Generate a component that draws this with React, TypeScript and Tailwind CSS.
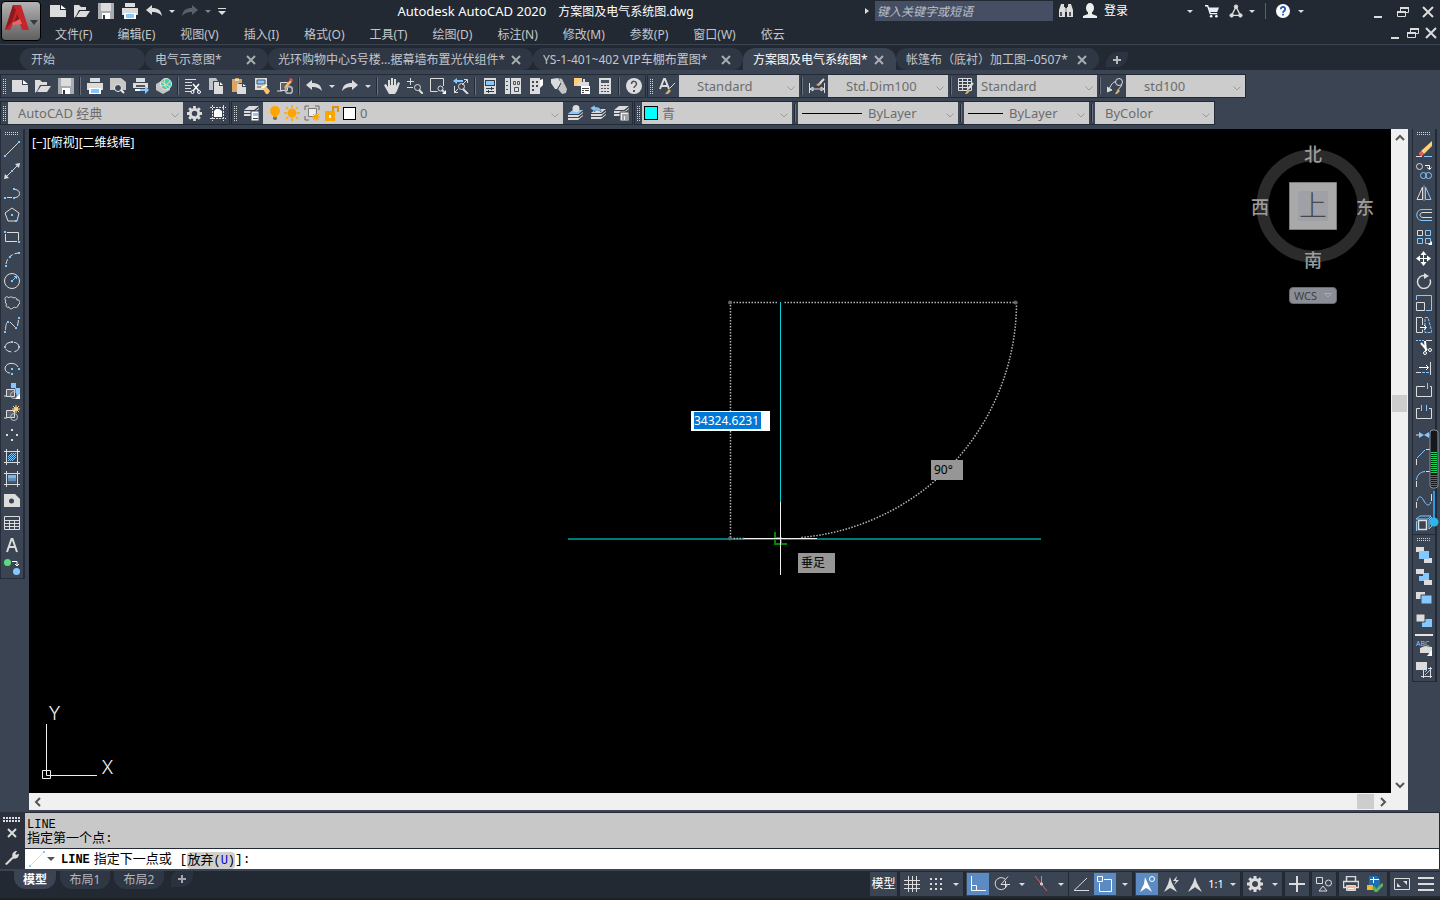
import React from 'react';
import clsx from 'clsx';

const G = '#dcdcdc';
const B = '#85c8ff';
const D = '#3b4453';

// Small node marker used by most of the draw icons
const Dot: React.FC<{ x: number; y: number; c?: string }> = ({ x, y, c = B }) => (
  <rect x={x} y={y} width="2" height="2" fill={c} stroke="none" />
);

const printer = (
  <g stroke="none">
    <path d="M3 0h10v4H3zM0 5h16v7h-2v-2H2v2H0z" fill={G} />
    <path d="M2 10h12v6H2z" fill="#fff" />
    <path d="M4 11h8v4H4z" fill={B} />
  </g>
);

const layers = (y: number) => (
  <path d={`M6 ${y}h10l-5 4H1zM1 ${y + 5}h11l4-3v1l-5 4H1zM1 ${y + 8}h11l4-3v1l-5 4H1z`} fill={G} stroke="none" />
);

const icons: Record<string, React.ReactNode> = {
  new: <g stroke="none"><path d="M0 2h10v5h6v7H0z" fill={G} /><path d="M11 2l5 4h-5z" fill="#fff" /></g>,
  open: <path d="M0 15V2h5l2 2h5v3H5l-3 6zM6 8h10l-4 6H2z" fill={G} stroke="none" />,
  save: <g stroke="none"><path d="M0 0h16v16H0z" fill="#a8abb0" /><path d="M3 0h10v8H3z" fill={G} /><path d="M4 10h8v6H4z" fill="#fff" /><path d="M5 12h2v4H5z" fill="#333" /></g>,
  print: printer,
  undo: <path d="M0 7l6-5v3c6 0 9 2 10 8-3-3-5-4-10-4v3z" fill={G} stroke="none" />,
  redo: <path d="M16 7l-6-5v3C4 5 1 7 0 13c3-3 5-4 10-4v3z" fill={G} stroke="none" />,
  redoOff: <path d="M16 7l-6-5v3C4 5 1 7 0 13c3-3 5-4 10-4v3z" fill="#59606c" stroke="none" />,
  preview: <g><path d="M0 0h11l5 4v8H0z" fill="#c8c8c8" stroke="none" /><circle cx="8" cy="10" r="3.5" fill={D} stroke="#eee" /><path d="M11 12l3 3" stroke="#eee" strokeWidth="2" /></g>,
  publish: <g stroke="none"><path d="M3 0h9v4H3zM0 5h15v5H0z" fill={G} /><path d="M3 7h9v2H3z" fill="#555" /><path d="M2 11h6v2H2z" fill="#fff" /><path d="M7 11h5V8l4 4-4 4v-3H7z" fill={B} /></g>,
  web: <g><path d="M0 6l7-4 7 4v6l-7 4-7-4z" fill="#c4c4c4" stroke="none" /><circle cx="10" cy="6" r="5.5" fill="#3fd0c4" stroke="#e6eeee" /><path d="M6 4l8 5M9 1c-2 4 0 8 3 10M5 8c4 0 7-2 9-5" stroke="#efe39a" /><path d="M6 9l4 2" stroke="#ff7575" /></g>,
  cut: <g><path d="M0 1.5h11M0 4.5h7M0 7.5h7M0 10.5h6M0 13.5h6" /><path d="M8 6l6 7M14 6l-6 7" stroke="#fff" strokeWidth="1.5" /><circle cx="7.5" cy="14" r="1.5" stroke="#fff" /><circle cx="14" cy="14" r="1.5" stroke="#fff" /></g>,
  copy: <g stroke="none"><path d="M1 0h7l2 3H5v9H1z" fill="#bfc2c6" /><path d="M6 4h5v4h4v8H6z" fill={G} /><path d="M12 4l3 3h-3z" fill="#fff" /></g>,
  paste: <g stroke="none"><path d="M1 1h3V0h4v1h3v4H8v9H1z" fill="#d9a565" /><path d="M4 1h4v2H4z" fill={G} /><path d="M6 6h5v3h4v7H6z" fill={G} /><path d="M12 6l3 2h-3z" fill="#fff" /></g>,
  match: <g><path d="M1 0h12v7h-2v5H1z" fill={G} stroke="none" /><path d="M3 2h8v4H3z" fill={B} stroke="#4a5361" /><path d="M3 9h4" stroke="#4a5361" /><path d="M7 8l3-2 6 7-2 3h-2z" fill="#ffc36e" stroke="none" /><path d="M8 10l5-3" stroke="#fff" strokeWidth="2" /></g>,
  blockEdit: <g><path d="M3.5 4.5h7v8h-7zM0 13h5" fill="#596170" /><circle cx="12" cy="12" r="3.5" stroke="#aeb1b7" strokeWidth="2" /><path d="M8 8l5-6 2 2-5 5-3 1z" fill="#ffb45c" stroke="none" /><path d="M12 1l2-1 2 2-1 2z" fill="#f24c4c" stroke="none" /></g>,
  pan: <path d="M5 16L1 9 0 7l2-1 2 3V2h2v5h1V0h2v7h1V1h2v7l2-4 2 1-3 8-2 3z" fill={G} stroke="none" />,
  zoomRt: <g><path d="M0 3.5h7M3.5 0v7M0 9.5h6" /><circle cx="10.5" cy="9.5" r="3" /><path d="M12 12l4 4" strokeWidth="2" /></g>,
  zoomWin: <g><path d="M13.5 8V.5H.5v13h7" /><circle cx="10.5" cy="10.5" r="2.5" /><path d="M12 12l2 2" strokeWidth="2" /><path d="M16 12v4h-4z" fill="#fff" stroke="none" /></g>,
  zoomPrev: <g><path d="M0 3l4-3v2h6v2H4v2z" fill={B} stroke="none" /><path d="M11 1.5h3.5V5M1.5 8v6.5H5M9 7l5-5M1 15l4-4" /><circle cx="8.5" cy="8.5" r="3" /><path d="M10 11l5 5" strokeWidth="2" /></g>,
  props: <g stroke="none"><path d="M2 0h12v16H2z" fill={G} /><path d="M3 2h10v6H3z" fill="#333b47" /><path d="M4 3h8v4H4z" fill={B} /><path d="M4 10h8v1H4zM4 13h8v1H4zM9 9h1v3H9zM6 12h1v3H6z" fill="#333b47" /></g>,
  designCenter: <g stroke="none"><path d="M0 0h5v16H0zM6 0h10v16H6z" fill={G} /><path d="M1 3h2v1H1zM1 7h2v1H1zM1 11h2v1H1z" fill="#4a5361" /><path d="M8.5 3.5h2v3h-2zM12.5 3.5h2v3h-2zM9.5 9.5h4v4h-4z" stroke="#4a5361" /></g>,
  palettes: <g stroke="none"><path d="M2 0h10v16H2z" fill={G} /><path d="M12 2l3-1v6l-3 3z" fill="#fff" /><path d="M4 3h2v2H4zM8 3h2v2H8zM4 7h2v2H4zM8 7h2v2H8zM4 11h2v2H4z" fill="#3f4754" /></g>,
  sheetSet: <g stroke="none"><path d="M0 1l7-1 3 5-4 6H4L0 5z" fill={G} /><path d="M8 0l3 1 5 10-1 4-4 1-4-5 3-5z" fill="#c4c4c4" /><path d="M6 12l4-7" stroke="#4a5361" /></g>,
  markup: <g stroke="none"><path d="M0 0h8v8H0z" fill="#ffcf78" /><path d="M4 4h11v4H4zM9 1h2v3H9z" fill={G} /><path d="M7 8h9v8H7z" fill="#fff" /><path d="M8 10h7v1H8zM8 12h2v1H8zM11 12h4v1h-4zM8 14h2v1H8z" fill="#444" /></g>,
  calc: <g stroke="none"><path d="M2 0h12v16H2z" fill={G} /><path d="M4 2h8v3H4zM4 7h2v1H4zM7 7h2v1H7zM10 7h2v1h-2zM4 10h2v1H4zM7 10h2v1H7zM10 10h2v1h-2zM4 13h2v1H4zM7 13h2v1H7zM10 13h2v1h-2z" fill="#4a5361" /></g>,
  help: <g><circle cx="8" cy="8" r="8" fill={G} stroke="none" /><path d="M5.5 6c0-4 5-3 5 0 0 2-2.5 2-2.5 4" stroke="#4a5361" strokeWidth="1.5" /><path d="M7 12h2v2H7z" fill="#4a5361" stroke="none" /></g>,
  textStyle: <g><path d="M1 11L5 1h1l4 10M2 8h6" strokeWidth="2" /><path d="M11 10l5-5" /><path d="M6 16l4-5 2 2-3 3z" fill="#e0ad6c" stroke="none" /></g>,
  dimStyle: <g><path d="M.5 5v10M15.5 5v10M1 11h14M1 11l3-2v4zM15 11l-3-2v4z" /><path d="M7 7l4-3 2 1-3 3z" fill="#e0ad6c" stroke="none" /><path d="M11 5l4-4" strokeWidth="2" /></g>,
  tableStyle: <g><path d="M.5.5h13v12H.5zM0 3.5h14M0 6.5h14M0 9.5h14M4.5 1v12M9.5 1v11" /><path d="M15 5l-5 6" strokeWidth="2" /><path d="M7 16l3-5 2 2-3 3z" fill="#e0ad6c" stroke="none" /></g>,
  leaderStyle: <g><circle cx="12" cy="4" r="3.5" /><path d="M9 4c-3-1-5 3-8 9" /><path d="M0 9v5l5-2z" fill={G} /><path d="M15 7l-4 5" /><path d="M8 16l3-5 2 2-3 3z" fill="#e0ad6c" stroke="none" /></g>,
  gear: <g><circle cx="8" cy="8" r="4.5" strokeWidth="3" /><path d="M8 0v3M8 13v3M0 8h3M13 8h3M2.3 2.3l2 2M11.7 11.7l2 2M2.3 13.7l2-2M11.7 4.3l2-2" strokeWidth="3" /></g>,
  workspace: <g><path d="M2.5 0v16M13.5 0v16M0 2.5h16M0 13.5h16" strokeDasharray="2 1" /><path d="M4 6l2-2h3l3 2v6H4z" fill="#fff" stroke="none" /></g>,
  layerProps: <g>{layers(1)}<path d="M8 6h8v10H8z" fill="#fff" stroke={D} /><path d="M10 8h5v3h-5z" fill={B} stroke="none" /><path d="M10 13.5h5" stroke="#444" /></g>,
  layerCur: <g>{layers(5)}<path d="M6 5h10l-5 4H1z" fill={B} stroke="none" /><circle cx="9" cy="3.5" r="3.5" fill={G} stroke="none" /></g>,
  layerPrev: <g>{layers(4)}<path d="M0 3l5-3v2c4 0 6 1 6 5-2-2-3-2-6-2v2z" fill={B} stroke={D} strokeWidth=".5" /></g>,
  layerState: <g>{layers(1)}<path d="M7 7h9v9H7z" fill="#eee" stroke={D} /><path d="M9 10h6M9 12h2M12 12h3M9 14h2M12 14h3" stroke="#555" /></g>,
  bulb: <g stroke="none"><circle cx="8" cy="6" r="5" fill="#ffa500" /><path d="M5 8h6l-1 4H6z" fill="#ffa500" /><path d="M6 12h4v2l-1 1H7l-1-1z" fill="#777" /></g>,
  sun: <g stroke="#ffa500"><circle cx="8" cy="8" r="4.5" fill="#ffa500" stroke="none" /><path d="M8 0v3M8 13v3M0 8h3M13 8h3M2 2l2 2M12 12l2 2M2 14l2-2M12 4l2-2" strokeWidth="1.5" /></g>,
  vpFreeze: <g><path d="M1 5V1h4M11 1h4v4M1 11v4h4" stroke="#666" /><path d="M4.5 3.5h8v8h-8z" stroke="#777" fill="#eee" /><circle cx="12" cy="12" r="2.5" fill="#ffa500" stroke="none" /><path d="M12 8v8M8 12h8M9 9l6 6M9 15l6-6" stroke="#ffa500" /></g>,
  lock: <g><path d="M1 6h10v10H1z" fill="#ffa500" stroke="none" /><path d="M9 6V2h5v5" stroke="#e0920a" strokeWidth="2" /><path d="M6 10v3" stroke="#fff" strokeWidth="2" /></g>,
  line: <g><path d="M2 14L14 2" /><Dot x={0} y={14} /><Dot x={14} y={0} /></g>,
  xline: <g><path d="M2 14L14 2" /><path d="M0 16l1-5 4 4zM16 0l-5 1 4 4z" fill={G} stroke="none" /><Dot x={7} y={7} /></g>,
  pline: <g><path d="M3 12.5h5M11 4.5c6 0 6 8 0 8" /><Dot x={0} y={12} /><Dot x={9} y={12} /><Dot x={9} y={3} /></g>,
  polygon: <g><path d="M8 1l7 5-2 8H4L1 6z" /><Dot x={7} y={7} /><Dot x={11} y={13} /></g>,
  rect: <g><path d="M3 3.5h11.5v8M1.5 5v7.5H13" /><Dot x={0} y={2} /><Dot x={14} y={12} /></g>,
  arc: <g><path d="M2 13C3 7 7 3 14 2" strokeDasharray="5 2" /><Dot x={1} y={14} /><Dot x={5} y={5} /><Dot x={14} y={1} /></g>,
  circle: <g><circle cx="8" cy="8" r="7.5" /><Dot x={7} y={7} /><path d="M9 7l4-4M10 3.5h2.5V6" stroke={B} /></g>,
  cloud: <path d="M2 6C-1 3 3 0 5 3c1-2 4-1 4 0 2-1 4 0 4 2 3-1 4 4 1 5 0 3-3 3-4 2-2 3-5 2-5 0-3 1-4-2-2-3-2 0-2-3-1-3z" />,
  spline: <g><path d="M1.5 13C2 8 2 6 4 5M6 5l5 5M13.5 9l1-6" /><Dot x={0} y={14} /><Dot x={3} y={4} /><Dot x={11} y={10} /><Dot x={14} y={0} /></g>,
  ellipse: <g><ellipse cx="8" cy="8" rx="7" ry="5" strokeDasharray="7 3" /><Dot x={0} y={7} /><Dot x={14} y={7} /><Dot x={7} y={2} /></g>,
  ellipseArc: <g><path d="M14 6C12 1 2 1 1 7c0 3 2 5 5 5" /><Dot x={7} y={7} /><Dot x={14} y={7} /><Dot x={7} y={12} /></g>,
  insert: <g><path d="M2.5 6.5h8v7h-8zM0 13h3" fill="#596170" /><path d="M7 0h5v5H7zM11 5h5v9h-3z" fill={B} stroke="none" /><circle cx="10" cy="12" r="3.5" stroke="#b7babf" /><path d="M16 11v5h-5z" fill="#fff" stroke="none" /></g>,
  block: <g><path d="M2.5 5.5h8v7h-8zM0 13h3" fill="#596170" /><circle cx="10" cy="12" r="3.5" stroke="#b7babf" /><path d="M12 0v8M8 4h8M9 1l6 6M9 7l6-6" stroke="#ffd277" /><circle cx="12" cy="4" r="2" fill="#ffd277" stroke="none" /></g>,
  point: <g><Dot x={7} y={2} c={G} /><Dot x={2} y={7} c={G} /><Dot x={12} y={7} c={G} /><Dot x={7} y={12} c={G} /></g>,
  hatch: <g><path d="M2.5 0v16M13.5 0v16M0 2.5h16M0 13.5h16" /><path d="M4 8l4-4M4 12l8-8M8 12l4-4M4 10l6-6M6 12l6-6" stroke={B} /></g>,
  gradient: <g><path d="M2.5 0v16M13.5 0v16M0 2.5h16M0 13.5h16" /><path d="M4 4h8v3H4z" fill="#7ab8ea" stroke="none" /><path d="M4 7h8v3H4z" fill="#638fb5" stroke="none" /><path d="M4 10h8v2H4z" fill="#495d74" stroke="none" /></g>,
  region: <g stroke="none"><path d="M0 1h11l5 5v8H0z" fill={G} /><circle cx="7.5" cy="8" r="2.5" fill={D} /></g>,
  table: <path d="M.5 1.5h15v13H.5zM0 5.5h16M0 8.5h16M0 11.5h16M5.5 5v9M10.5 5v9" />,
  mtext: <path d="M3 15L7.5 2h1L13 15M4 10h8" strokeWidth="2" />,
  addSel: <g><circle cx="3.5" cy="3.5" r="3.5" fill="#5ed983" stroke="none" /><circle cx="12.5" cy="12.5" r="3.5" fill={B} stroke="none" /><path d="M8 2.5h5V6M11 5l2 2 2-2" stroke="#fff" /></g>,
  erase: <g><path d="M16 0v5l-8 8-3-3z" fill="#ffd27a" stroke="none" /><path d="M5 10l3 3-2 2c-2 0-3-1-3-3z" fill="#f25a5a" stroke="none" /><path d="M0 15.5h6" /><path d="M8 15.5h8" stroke={B} /></g>,
  copyObj: <g><circle cx="3.5" cy="3.5" r="3" /><path d="M9 2.5h4.5V6M11 4.5l2.500 2 2-2" stroke="#fff" /><circle cx="7.5" cy="12.5" r="3" stroke={B} /><circle cx="12.5" cy="12.5" r="3" stroke={B} /></g>,
  mirror: <g><path d="M6.5 2v12.5H1z" /><path d="M9.5 2v12.5H15z" stroke={B} /><path d="M8 0v16" stroke="#8d939c" /></g>,
  offset: <g><path d="M16 2.5H6c-7 0-7 11 0 11h10" stroke={B} /><path d="M16 5.5H7c-4 0-4 5 0 5h9" /></g>,
  array: <g><path d="M1.5 1.5h5v5h-5z" /><path d="M9.5 1.5h5v5h-5zM1.5 9.5h5v5h-5zM9.5 9.5h5v5h-5z" stroke={B} /><path d="M16 12v4h-4z" fill="#fff" stroke="none" /></g>,
  move: <g><path d="M7.5 2v12M2 7.5h12" stroke="#fff" /><path d="M7.5 0l3 4h-6zM7.5 15l3-4h-6zM0 7.5l4-3v6zM15 7.5l-4-3v6z" fill="#fff" stroke="none" /></g>,
  rotate: <g><path d="M9 2.5a6.5 6.5 0 1 0 5 4" strokeWidth="1.5" /><path d="M8 0l5 3-5 3z" fill={G} stroke="none" /></g>,
  scale: <g><path d="M.5 5V.5h15v15H10" stroke={B} /><path d="M.5 7.5h8v8h-8z" /></g>,
  stretch: <g><path d="M6 .5H.5v15h6v-3M6.5 1v7" /><path d="M9 .5h3l4 15H9z" stroke={B} strokeDasharray="3 1" /><path d="M4 10.5h6M8 8l2.500 2.500L8 13" stroke="#fff" /></g>,
  trim: <g><path d="M0 1.5h8" stroke={B} strokeDasharray="2 1" /><path d="M10 1.5h6" /><path d="M5 4l6 7M9 2l1 10" stroke="#fff" strokeWidth="2" /><circle cx="9" cy="14" r="1.5" stroke="#fff" /><circle cx="14" cy="11" r="1.5" stroke="#fff" /></g>,
  extend: <g><path d="M3 6.5h9M10 4l2.500 2.500L10 9" stroke="#fff" /><path d="M14.5 1v13" /><path d="M0 11.5h5" /><path d="M6 11.5h8" stroke={B} strokeDasharray="3 1" /></g>,
  breakPt: <g><path d="M9 3.5H.5v10h15v-10H14" /><path d="M11.5 0v6" stroke={B} /></g>,
  breakObj: <g><path d="M4 3.5H.5v10h15v-10H13" /><path d="M5.5 0v6M10.5 0v6" stroke={B} /></g>,
  join: <g><path d="M0 8h5M11 8h5" /><path d="M3 5l5 3-5 3zM13 5L8 8l5 3z" fill={B} stroke="none" /></g>,
  chamfer: <g><path d="M.5 16v-6M10 .5h6" /><path d="M1 9l8-8" stroke={B} /></g>,
  fillet: <g><path d="M.5 16v-6M10 .5h6" /><path d="M.5 9C1 4 4 1 9 .5" stroke={B} /></g>,
  blend: <g><path d="M.5 15V9M15.5 8V1" /><path d="M1 8c2-7 5-4 7 0s5 6 7 1" stroke={B} /></g>,
  explode: <g><path d="M2.5 5.5h8v9h-8z" strokeWidth="1.5" /><path d="M0 4l4-3h11l-3 3zM13 5l3-3v9l-3 3zM.5 6v10" stroke={B} /></g>,
  front: <g stroke="none"><path d="M0 0h8v5H0zM8 11h8v5H8z" fill={G} /><path d="M3 4h10v8H3z" fill={B} /></g>,
  back: <g stroke="none"><path d="M7 4h6v8H3V7h4z" fill={B} /><path d="M0 0h8v5H0zM8 11h8v5H8z" fill={G} /></g>,
  above: <g stroke="none"><path d="M0 1h9v7H0z" fill={G} /><path d="M5 4h11v9H5z" fill={B} stroke={D} /></g>,
  under: <g stroke="none"><path d="M6 6h10v8H6z" fill={B} /><path d="M0 1h9v8H0z" fill={G} stroke={D} /></g>,
  textFront: <g><text x="0" y="6" fontSize="7" fill={B} stroke="none">ABC</text><path d="M4 8l5-2 7 1v6H4z" fill={G} stroke="none" /><path d="M16 10v6h-5z" fill="#fff" stroke="none" /></g>,
  hatchBack: <g><path d="M0 0h11v8H0z" fill={G} stroke="none" /><path d="M7.5 8v8M14.5 5v11M5 14.5h11M12 6.5h4" /><path d="M9 13l5-5M9 10l2-2" stroke={B} /></g>,
  wrench: <path d="M1 15L9 7c-1-4 2-6 5-6l-2 3 1 1 3-1c0 4-3 6-6 5l-7 7z" fill={G} stroke="none" />,
  binoculars: <g stroke="none"><path d="M3 1h3v3h1v10H1V7zM10 1h3l2 6v7H9V4h1z" fill={G} /><path d="M7 5h2v4H7z" fill="#aaa" /><path d="M2 9h2v4H2zM11 9h2v4h-2z" fill="#555" /></g>,
  user: <g stroke="none"><ellipse cx="8" cy="5" rx="4" ry="5" fill="#eee" /><path d="M6 9h4v2l5 2v2H1v-2l5-2z" fill="#eee" /></g>,
  cart: <g><path d="M0 2h3l3 9h8" stroke="#fff" strokeWidth="1.5" /><path d="M4 4h12l-2 5H6z" fill="#e8ebff" stroke="none" /><circle cx="7" cy="14" r="1.5" fill="#fff" stroke="none" /><circle cx="13" cy="14" r="1.5" fill="#fff" stroke="none" /></g>,
  share: <g><path d="M8 3l5 10H3z" strokeWidth="1.5" /><circle cx="8" cy="3" r="2" fill={G} /><circle cx="3" cy="13" r="2" fill={G} /><circle cx="13" cy="13" r="2" fill={G} /></g>,
  helpBlue: <g><circle cx="8" cy="8" r="8" fill="#fff" stroke="none" /><path d="M5.5 6c0-4 5-3 5 0 0 2-2.5 2-2.5 4" stroke="#1c55ad" strokeWidth="2" /><path d="M7 11h2v2H7z" fill="#1c55ad" stroke="none" /></g>,
  min: <path d="M4 13h8" strokeWidth="2" />,
  restore: <g><path d="M5.5 7V3.5h8v5H11" /><path d="M5 4h9" strokeWidth="2" /><path d="M2.5 7.5h8v5h-8z" /><path d="M2 8h9" strokeWidth="2" /></g>,
  close: <path d="M3 3l10 10M13 3L3 13" strokeWidth="2" />,
  x: <path d="M4 4l8 8M12 4l-8 8" strokeWidth="2" />,
  plus: <path d="M8 4v8M4 8h8" strokeWidth="2" />,
  bigPlus: <path d="M8 0v16M0 8h16" strokeWidth="2" />,
  grid: <path d="M4.5 0v16M8.5 0v16M12.5 0v16M0 4.5h16M0 8.5h16M0 12.5h16" />,
  snap: <path d="M2 3h12M2 8h12M2 13h12" strokeWidth="2" strokeDasharray="2 3" />,
  ortho: <g><path d="M1.5 0v14.5H16" stroke="#fff" /><path d="M2 9.5h4.5v5" stroke="#fff" /></g>,
  polar: <g><path d="M11 3a6 6 0 1 0 2 6M7 8.5l7-8M7 8.5h9M11.5 5v7" /></g>,
  iso: <g><path d="M8.5 0v8" stroke="#55c27a" /><path d="M2 0l12 15" stroke="#e85f66" /><circle cx="8.5" cy="8" r="1" stroke="#fff" /></g>,
  track: <path d="M14 2L1 14.5h15" />,
  osnap: <g><path d="M7 3.5h7.5v12H2.5V7" stroke="#fff" /><path d="M.5.5h5v5h-5z" stroke="#fff" /></g>,
  ann1: <g><path d="M6 1l3 7 4 8-4-3-2-1-6 4 4-8z" fill="#fff" stroke="none" /><circle cx="13" cy="3" r="2.5" stroke="#fff" /></g>,
  ann2: <g><path d="M7 1l2 6 5 9-5-3-2-1-6 4 4-8z" fill={G} stroke="none" /><path d="M14 0l-4 5h3l-2 4 5-5h-3z" fill={G} stroke="none" /></g>,
  ann3: <path d="M8 1l2 6 5 9-6-4-1-1-1 1-6 4 5-9z" fill={G} stroke="none" />,
  isolate: <g><path d="M.5 1.5h6v6h-6zM7 10l4 5H3z" /><circle cx="12.5" cy="7" r="3" /></g>,
  plot: <g><path d="M3.5 5V.5h9V5M3 11.5H.5v-6h15v6H13" strokeWidth="1.5" /><path d="M3.5 9.5h9v5h-9z" fill="#f4b393" /><path d="M5 12.5h6" stroke="#fff" /></g>,
  trusted: <g stroke="none"><path d="M2 0h8l3 3v9H2z" fill="#1f6fb0" /><path d="M3 3h9v1H3zM6 1h1v6H6z" fill="#fff" /><path d="M0 9h6v5H0z" fill="#f6b62c" /><path d="M6 11l3 4 7-7" stroke="#5db35d" strokeWidth="3" /></g>,
  clean: <g><path d="M.5 2.5h15v11H.5z" /><path d="M9 5h4v4zM3 7v4h4z" fill={G} stroke="none" /></g>,
  burger: <path d="M0 2h16M0 8h16M0 14h16" strokeWidth="2" />,
};

const Icon: React.FC<{ name: string; className?: string }> = ({ name, className = 'size-4' }) => (
  <svg viewBox="0 0 16 16" fill="none" stroke={G} className={clsx('shrink-0', className)} aria-hidden="true">
    {icons[name]}
  </svg>
);

const IconButton: React.FC<{ name: string; className?: string; icon?: string }> = ({ name, className = 'w-[23px] h-full', icon }) => (
  <button type="button" aria-label={name} className={clsx('flex items-center justify-center shrink-0', className)}>
    <Icon name={name} className={icon} />
  </button>
);

const Drop: React.FC<{ className?: string; dim?: boolean }> = ({ className = 'w-[13px]', dim }) => (
  <button type="button" aria-label="More" className={clsx('flex h-full items-center justify-center shrink-0', className)}>
    <svg viewBox="0 0 6 3" className="h-[3px] w-1.5"><path d="M0 0h6L3 3z" fill={dim ? '#7d838c' : G} /></svg>
  </button>
);

const Sep = () => (
  <div className="flex h-full w-1.5 shrink-0 justify-center py-0.5">
    <div className="h-full w-0.5 border-l border-[#222a35] bg-[#69717e]" />
  </div>
);

const Grip = () => (
  <svg viewBox="0 0 7 15" className="h-[15px] w-[7px] shrink-0" aria-hidden="true">
    <path d="M2.5 0v15M4.5 0v15" stroke="#d0d2d6" strokeDasharray="1 1" />
  </svg>
);

const GripH = () => (
  <svg viewBox="0 0 14 9" className="mx-auto block h-[9px] w-3.5" aria-hidden="true">
    <path d="M0 3.5h14M0 5.5h14" stroke="#d0d2d6" strokeDasharray="1 1" />
  </svg>
);

const Chevron = () => (
  <svg viewBox="0 0 8 5" className="mt-1 mr-1 h-[5px] w-2 shrink-0" fill="none" stroke="#9a9a9a"><path d="M.5.5L4 4 7.5.5" /></svg>
);

interface ComboProps {
  label: string;
  value: string;
  className: string;
  pad?: string;
  children?: React.ReactNode;
}

const Combo: React.FC<ComboProps> = ({ label, value, className, pad = 'pl-4', children }) => (
  <div className={clsx('flex h-full shrink-0 items-center bg-[#cccccc]', className)}>
    {children}
    <select aria-label={label} defaultValue={value} className={clsx('h-full min-w-0 flex-1 appearance-none bg-transparent pt-0.5 text-[13px] text-[#6c6c6c]', pad)}>
      <option>{value}</option>
    </select>
    <Chevron />
  </div>
);

const Bar: React.FC<{ children: React.ReactNode }> = ({ children }) => (
  <div className="flex h-6 shrink-0 items-center border border-[#222a35]">{children}</div>
);

const menus = ['文件(F)', '编辑(E)', '视图(V)', '插入(I)', '格式(O)', '工具(T)', '绘图(D)', '标注(N)', '修改(M)', '参数(P)', '窗口(W)', '依云'];

const tabs = [
  { title: '电气示意图*', width: 'w-[123px]' },
  { title: '光环购物中心5号楼...据幕墙布置光伏组件*', width: 'w-[265px]' },
  { title: 'YS-1-401~402 VIP车棚布置图*', width: 'w-[210px]' },
  { title: '方案图及电气系统图*', width: 'w-[153px]', active: true },
  { title: '帐篷布（底衬）加工图--0507*', width: 'w-[203px]' },
];

const standardTools = [
  ['new', 'open', 'save'],
  ['print', 'preview', 'publish', 'web'],
  ['cut', 'copy', 'paste', 'match', 'blockEdit'],
];
const viewTools = [
  ['pan', 'zoomRt', 'zoomWin', 'zoomPrev'],
  ['props', 'designCenter', 'palettes', 'sheetSet', 'markup', 'calc'],
];
const drawTools = ['line', 'xline', 'pline', 'polygon', 'rect', 'arc', 'circle', 'cloud', 'spline', 'ellipse', 'ellipseArc', 'insert', 'block', 'point', 'hatch', 'gradient', 'region', 'table', 'mtext', 'addSel'];
const modifyTools = ['erase', 'copyObj', 'mirror', 'offset', 'array', 'move', 'rotate', 'scale', 'stretch', 'trim', 'extend', 'breakPt', 'breakObj', 'join', 'chamfer', 'fillet', 'blend', 'explode'];

const Header = () => (
  <header className="flex h-[45px] shrink-0 border-b border-[#3b4453] bg-[#222933]">
    <button type="button" aria-label="Application menu" className="m-px flex h-10 w-10 items-start rounded-sm border border-black bg-gradient-to-b from-[#b4b4b4] to-[#606060] pt-0.5 pl-0.5">
      <svg viewBox="0 0 26 28" className="h-7 w-[26px]">
        <path d="M9 1h8l8 25h-7l-2-6-7-1-3 7H1z" fill="#c4262c" />
        <path d="M12 6L8 18l-7 8L9 1zM13 10l3 7-6 1z" fill="#8d1a1f" />
        <path d="M8 19l8-4 2 5-9 1z" fill="#e8666a" />
      </svg>
      <svg viewBox="0 0 8 5" className="mt-4 h-[5px] w-2"><path d="M0 0h8L4 5z" fill="#333b47" /></svg>
    </button>
    <div className="min-w-0 flex-1">
      <div className="flex h-[22px] items-center pl-1">
        {['new', 'open', 'save', 'print', 'undo'].map((n) => <IconButton key={n} name={n} className="w-6 h-full" />)}
        <Drop className="w-3" />
        <IconButton name="redoOff" className="w-6 h-full" />
        <Drop className="w-3" dim />
        <button type="button" aria-label="Customize" className="flex h-full w-4 items-center justify-center">
          <svg viewBox="0 0 8 7" className="h-[7px] w-2"><path d="M0 0h8v1H0zM0 3h8L4 7z" fill={G} /></svg>
        </button>
        <h1 className="min-w-0 flex-1 truncate pt-0.5 text-center text-[13px] text-white">
          Autodesk AutoCAD 2020<span className="ml-3 text-xs">方案图及电气系统图.dwg</span>
        </h1>
        <svg viewBox="0 0 4 6" className="mr-1.5 ml-1 h-1.5 w-1"><path d="M0 0l4 3-4 3z" fill={G} /></svg>
        <input aria-label="Search" placeholder="键入关键字或短语" className="h-5 w-[178px] bg-[#454e63] px-0.5 text-xs italic text-white placeholder:text-[#bcc1ca]" />
        <IconButton name="binoculars" className="ml-px w-6 h-full" />
        <button type="button" className="flex h-full items-center pl-1 text-xs text-white">
          <Icon name="user" /><span className="ml-1.5">登录</span>
        </button>
        <Drop className="ml-[54px] w-4" />
        <IconButton name="cart" className="ml-0.5 w-6 h-full" icon="size-3.5" />
        <IconButton name="share" className="w-6 h-full" icon="size-3.5" />
        <Drop className="w-2" />
        <div className="mr-[5px] ml-[9px] h-4 w-px bg-[#596170]" />
        <IconButton name="helpBlue" className="w-6 h-full" icon="size-[14px]" />
        <Drop className="w-3" />
        <div className="ml-[58px] flex h-full items-center pt-0.5">
          <IconButton name="min" className="w-[25px] h-full" />
          <IconButton name="restore" className="w-[25px] h-full" />
          <IconButton name="close" className="w-[25px] h-full" />
        </div>
      </div>
      <nav className="flex h-[22px] items-center pl-[13px]">
        <div className="flex flex-1 items-center gap-[25px] pt-[3px]">
          {menus.map((m) => <button key={m} type="button" className="whitespace-nowrap text-xs leading-4 text-[#c4c6c9]">{m}</button>)}
        </div>
        <IconButton name="min" className="w-[18px] h-full" />
        <IconButton name="restore" className="w-[18px] h-full" />
        <IconButton name="close" className="w-[18px] h-full" />
      </nav>
    </div>
  </header>
);

const FileTabs = () => (
  <div className="flex h-[25px] shrink-0 items-start bg-[#222933] pt-[3px] pl-5 text-xs text-[#c4c6c9]">
    <button type="button" className="h-[22px] w-[125px] rounded-xl bg-[#2f3745] pt-0.5 pl-[11px] text-left">开始</button>
    {tabs.map((t) => (
      <div key={t.title} className={clsx('flex h-[22px] shrink-0 items-center pt-0.5 pr-[9px] pl-2.5', t.width, t.active ? 'rounded-t-xl bg-[#3b4453] text-white' : 'rounded-xl bg-[#2f3745]')}>
        <button type="button" className="min-w-0 flex-1 overflow-hidden text-left whitespace-nowrap">{t.title}</button>
        <IconButton name="x" className="w-4 h-full opacity-70" icon="size-4" />
      </div>
    ))}
    <IconButton name="plus" className="mt-1 ml-[7px] h-[15px] w-[22px] rounded-tl-xl rounded-br-xl bg-[#2f3745] opacity-80" icon="size-4" />
  </div>
);

const Toolbars = () => (
  <div className="flex shrink-0 flex-col gap-[3px] bg-[#3b4453] py-1">
    <div className="flex gap-px">
      <Bar>
        <Grip />
        {standardTools.map((g, i) => (
          <React.Fragment key={i}>{g.map((n) => <IconButton key={n} name={n} />)}<Sep /></React.Fragment>
        ))}
        <IconButton name="undo" />
        <Drop />
        <IconButton name="redo" />
        <Drop />
        {viewTools.map((g) => (
          <React.Fragment key={g[0]}><Sep />{g.map((n) => <IconButton key={n} name={n} />)}</React.Fragment>
        ))}
        <Sep />
        <IconButton name="help" />
      </Bar>
      <Bar>
        <Grip />
        <IconButton name="textStyle" className="w-6 h-full" />
        <Combo label="Text style" value="Standard" className="w-[120px]" pad="pl-[18px]" />
        <Sep />
        <IconButton name="dimStyle" />
        <Combo label="Dimension style" value="Std.Dim100" className="w-[120px]" pad="pl-[18px]" />
        <Sep />
        <IconButton name="tableStyle" />
        <Combo label="Table style" value="Standard" className="w-[120px]" pad="pl-1" />
        <Sep />
        <IconButton name="leaderStyle" />
        <Combo label="Leader style" value="std100" className="w-[119px]" pad="pl-[18px]" />
      </Bar>
    </div>
    <div className="flex gap-px">
      <Bar>
        <Grip />
        <Combo label="Workspace" value="AutoCAD 经典" className="w-[175px]" pad="pl-2.5" />
        <IconButton name="gear" icon="size-[15px]" />
        <IconButton name="workspace" />
      </Bar>
      <Bar>
        <Grip />
        <IconButton name="layerProps" className="w-6 h-full" />
        <Combo label="Layer" value="0" className="w-[300px]" pad="pl-1">
          <div className="flex items-center gap-px pl-1">
            {['bulb', 'sun', 'vpFreeze', 'lock'].map((n) => <Icon key={n} name={n} className={n === 'vpFreeze' ? 'mx-[3px] size-4' : 'size-4'} />)}
            <div className="ml-0.5 size-[13px] border border-black bg-white" />
          </div>
        </Combo>
        <IconButton name="layerCur" />
        <IconButton name="layerPrev" />
        <IconButton name="layerState" />
      </Bar>
      <Bar>
        <Grip />
        <Combo label="Color" value="青" className="w-[150px]" pad="pl-1">
          <div className="ml-0.5 size-3.5 border border-black bg-[#00ffff]" />
        </Combo>
        <Sep />
        <Combo label="Linetype" value="ByLayer" className="w-[160px]" pad="pl-1.5">
          <div className="ml-1 h-px w-[60px] bg-black" />
        </Combo>
        <Sep />
        <Combo label="Lineweight" value="ByLayer" className="w-[125px]" pad="pl-1.5">
          <div className="ml-1 h-px w-[35px] bg-black" />
        </Combo>
        <Sep />
        <Combo label="Plot style" value="ByColor" className="w-[119px]" pad="pl-2.5" />
      </Bar>
    </div>
  </div>
);

const Compass = () => (
  <div className="absolute top-2 right-4 w-[124px]">
    <svg viewBox="0 -8 124 140" className="block w-full" fontSize="18" fontWeight="500" fill="#9c9c9c" textAnchor="middle">
      <circle cx="62" cy="61" r="50.5" fill="none" stroke="#2b2b2b" strokeWidth="12" />
      <path d="M38.5 37.5h47v47h-47z" fill="#a9a9a9" stroke="#7c7c7c" />
      <path d="M47 46h30v30H47z" fill="#9fa1a6" />
      <text x="62" y="71" fontSize="28" fontWeight="300" fill="#45484e">上</text>
      <text x="62" y="16">北</text>
      <text x="9" y="69">西</text>
      <text x="114" y="69">东</text>
      <text x="62" y="122">南</text>
    </svg>
    <button type="button" className="mx-auto mt-2.5 flex h-[17px] w-12 items-center justify-between rounded-sm border border-[#666a73] bg-[#8b8e97] px-1 text-[11px] leading-none text-[#3c3f45]">
      WCS
      <svg viewBox="0 0 8 5" className="h-[5px] w-2"><path d="M.5.5h7L4 4z" fill="none" stroke="#a9acb4" /></svg>
    </button>
  </div>
);

const Drawing = () => (
  <main className="relative min-w-0 flex-1 overflow-hidden bg-black text-xs">
    <p className="absolute top-1.5 left-[3px] text-white">[−][俯视][二维线框]</p>
    <svg className="absolute top-0 left-0 h-[460px] w-[1040px]" fill="none">
      <path d="M539 410h473" stroke="#009a9c" strokeWidth="2" opacity=".8" />
      <g stroke="#b4b4b4" strokeWidth="1.5" strokeDasharray="1.5 1.5">
        <path d="M701.5 173.5h286M701.5 173v236M701.5 409.5h14" />
        <path d="M987.5 173.5a236 236 0 0 1-216 235" />
      </g>
      <path d="M748 173.5h7" stroke="#000" strokeWidth="3" />
      <g fill="#666"><circle cx="701" cy="173.5" r="2" /><circle cx="986.5" cy="173.5" r="2" /><circle cx="701" cy="409.5" r="2" /></g>
      <path d="M751.5 173v200" stroke="#00d5dc" />
      <path d="M746 403v12h12M746 409h6v6" stroke="#008a00" strokeWidth="2" />
      <path d="M751.5 373v73M715 409.5h73" stroke="#f0f0f0" />
    </svg>
    <div className="absolute top-[282px] left-[662px] h-5 w-[79px] bg-white p-px pl-[3px]">
      <input aria-label="Length" defaultValue="34324.6231" className="block h-[17px] w-[67px] bg-[#0078d7] text-xs text-white" />
    </div>
    <div className="absolute top-[331px] left-[902px] h-5 w-8 bg-[#969696] pl-[3px] leading-5 text-black">90°</div>
    <div className="absolute top-[424px] left-[769px] h-5 w-[37px] bg-[#969696] pl-[3px] leading-5 text-black">垂足</div>
    <Compass />
    <svg viewBox="0 0 90 90" className="absolute bottom-2 left-2.5 size-[90px]" fill="none" stroke="#eee">
      <path d="M7.5 29v51.5H58M3.5 75.5h8v8h-8z" />
      <g fontFamily="Inter" fontSize="18" fontWeight="300" fill="#eee" stroke="none" textAnchor="middle">
        <text x="15.5" y="25">Y</text>
        <text x="68.5" y="79">X</text>
      </g>
    </svg>
  </main>
);

const Arrow: React.FC<{ d: string; label: string }> = ({ d, label }) => (
  <button type="button" aria-label={label} className="flex size-[17px] shrink-0 items-center justify-center">
    <svg viewBox="0 0 10 10" className="size-2.5" fill="none" stroke="#555" strokeWidth="2"><path d={d} /></svg>
  </button>
);

const ToolColumn: React.FC<{ names: string[] }> = ({ names }) => (
  <>
    {names.map((n) => <IconButton key={n} name={n} className="h-[22px] w-full" />)}
  </>
);

const Workspace = () => (
  <div className="flex min-h-0 flex-1 bg-[#3b4453]">
    <aside className="w-[29px] shrink-0">
      <div className="w-[25px] border-r-2 border-b border-l border-[#262d38]">
        <GripH />
        <ToolColumn names={drawTools} />
      </div>
    </aside>
    <div className="flex min-w-0 flex-1 flex-col">
      <div className="flex min-h-0 flex-1">
        <Drawing />
        <div className="flex w-[17px] shrink-0 flex-col bg-[#f0f0f0]">
          <Arrow label="Scroll up" d="M1 7l4-4 4 4" />
          <div className="flex-[249]" />
          <div className="mx-px h-[17px] bg-[#cdcdcd]" />
          <div className="flex-[364]" />
          <Arrow label="Scroll down" d="M1 3l4 4 4-4" />
        </div>
      </div>
      <div className="flex h-[17px] shrink-0 bg-[#f0f0f0] pr-[17px]">
        <Arrow label="Scroll left" d="M7 1L3 5l4 4" />
        <div className="flex-1" />
        <div className="my-px w-[17px] bg-[#cdcdcd]" />
        <Arrow label="Scroll right" d="M3 1l4 4-4 4" />
      </div>
    </div>
    <aside className="relative w-8 shrink-0 pl-1">
      <div className="w-[25px] border-r-2 border-b border-l border-[#222a35]">
        <GripH />
        <ToolColumn names={modifyTools} />
      </div>
      <div className="w-[25px] border-r-2 border-b border-l border-[#222a35]">
        <GripH />
        <ToolColumn names={['front', 'back', 'above', 'under']} />
        <div className="mx-0.5 mt-0.5 h-0.5 bg-[#e4e4e4]" />
        <div className="pt-px"><ToolColumn names={['textFront', 'hatchBack']} /></div>
      </div>
      <svg viewBox="0 0 10 100" className="absolute top-[300px] right-px h-[100px] w-2.5" fill="none">
        <rect x="1" y="1" width="8" height="58" rx="3" fill="#14181e" stroke="#8e939b" />
        <path d="M5 23v22" stroke="#1fd35a" strokeWidth="6" strokeDasharray="1 1" />
        <path d="M5 46v11" stroke="#55705f" strokeWidth="6" strokeDasharray="1 1" />
        <path d="M5 62v30" stroke="#2a9be0" strokeWidth="2" />
        <circle cx="5" cy="93" r="4.5" fill="#2fb5ea" />
      </svg>
    </aside>
  </div>
);

const CommandLine = () => (
  <section className="mt-0.5 flex h-[57px] shrink-0 bg-[#222a35]">
    <div className="flex w-[25px] shrink-0 flex-col items-center bg-[#2b323e] pr-0.5">
      <svg viewBox="0 0 18 9" className="mt-1 h-[9px] w-[18px]"><path d="M0 2h18M0 5h18" stroke={G} strokeWidth="2" strokeDasharray="2 1" /></svg>
      <IconButton name="x" className="h-4 w-5" />
      <IconButton name="wrench" className="mt-2 h-4 w-5" icon="size-[15px]" />
    </div>
    <div className="flex min-w-0 flex-1 flex-col pt-px pr-px font-['Liberation_Mono','Noto_Sans_CJK_SC',monospace] text-black">
      <div className="h-[35px] bg-[#c8c8c8] pt-[5px] pl-0.5">
        <p className="text-xs leading-[14px]">LINE</p>
        <p className="text-[13px] leading-[14px]">指定第一个点:</p>
      </div>
      <div className="mt-px flex h-5 items-center bg-white pl-1 text-[13px]">
        <Icon name="line" />
        <svg viewBox="0 0 8 4" className="ml-0.5 h-1 w-2"><path d="M0 0h8L4 4z" fill="#555" /></svg>
        <label htmlFor="command" className="ml-1.5 flex items-center pt-0.5 whitespace-nowrap">
          <b className="mr-1 text-xs">LINE</b>指定下一点或&nbsp;[
          <a href="#undo" className="rounded-sm bg-[#cfcfcf] leading-[17px]">放弃<span className="text-xs">(<span className="text-[#0000e0]">U</span>)</span></a>]:
        </label>
        <input id="command" className="ml-1 h-full min-w-0 flex-1 bg-transparent outline-none" />
      </div>
    </div>
  </section>
);

const StatusGroup: React.FC<{ className?: string; children: React.ReactNode }> = ({ className, children }) => (
  <div className={clsx('mt-px flex h-6 items-center bg-[#3b4453]', className)}>{children}</div>
);

const Status: React.FC<{ name: string; on?: boolean }> = ({ name, on }) => (
  <IconButton name={name} className={clsx('h-[22px] w-6', on && 'border-x border-[#3b4453] bg-[#5b8bc2]')} />
);

const StatusBar = () => (
  <footer className="flex h-[31px] shrink-0 justify-between border-t-2 border-b-2 border-t-[#3b4453] border-b-[#1d2025] bg-[#222933] text-xs">
    <div className="flex h-[18px] pl-3.5 text-[#b4b7bc]">
      <button type="button" className="w-[42px] rounded-b-xl bg-[#3b4453] leading-4 font-bold text-white">模型</button>
      <button type="button" className="ml-1 w-[50px] rounded-b-xl bg-[#2f3745] leading-4">布局1</button>
      <button type="button" className="ml-1 w-[50px] rounded-b-xl bg-[#2f3745] leading-4">布局2</button>
      <IconButton name="plus" className="ml-[7px] h-4 w-[22px] rounded-tl-lg rounded-br-xl bg-[#2f3745] opacity-70" />
    </div>
    <div className="flex gap-[3px] text-white">
      <StatusGroup><button type="button" className="w-[27px] text-center">模型</button></StatusGroup>
      <StatusGroup><Status name="grid" /><Status name="snap" /><Drop className="w-[15px]" /></StatusGroup>
      <StatusGroup>
        <Status name="ortho" on /><Status name="polar" /><Drop className="w-[15px]" /><Status name="iso" /><Drop className="w-[15px]" />
      </StatusGroup>
      <StatusGroup className="-ml-0.5"><Status name="track" /><Status name="osnap" on /><Drop className="w-[15px]" /></StatusGroup>
      <StatusGroup>
        <Status name="ann1" on /><Status name="ann2" /><Status name="ann3" />
        <button type="button" className="w-[18px] text-center text-[11px]">1:1</button><Drop className="w-[15px]" />
      </StatusGroup>
      <StatusGroup><Status name="gear" /><Drop className="w-[15px]" /></StatusGroup>
      <StatusGroup><Status name="bigPlus" /></StatusGroup>
      <StatusGroup><Status name="isolate" /></StatusGroup>
      <StatusGroup><Status name="plot" /><Status name="trusted" /></StatusGroup>
      <StatusGroup className="pr-0.5"><Status name="clean" /><Status name="burger" /></StatusGroup>
    </div>
  </footer>
);

function App() {
  return (
    <div className="flex h-screen flex-col overflow-hidden bg-[#3b4453] font-['Noto_Sans','Noto_Sans_CJK_SC',sans-serif]">
      <Header />
      <FileTabs />
      <Toolbars />
      <Workspace />
      <CommandLine />
      <StatusBar />
    </div>
  );
}

export default App;
